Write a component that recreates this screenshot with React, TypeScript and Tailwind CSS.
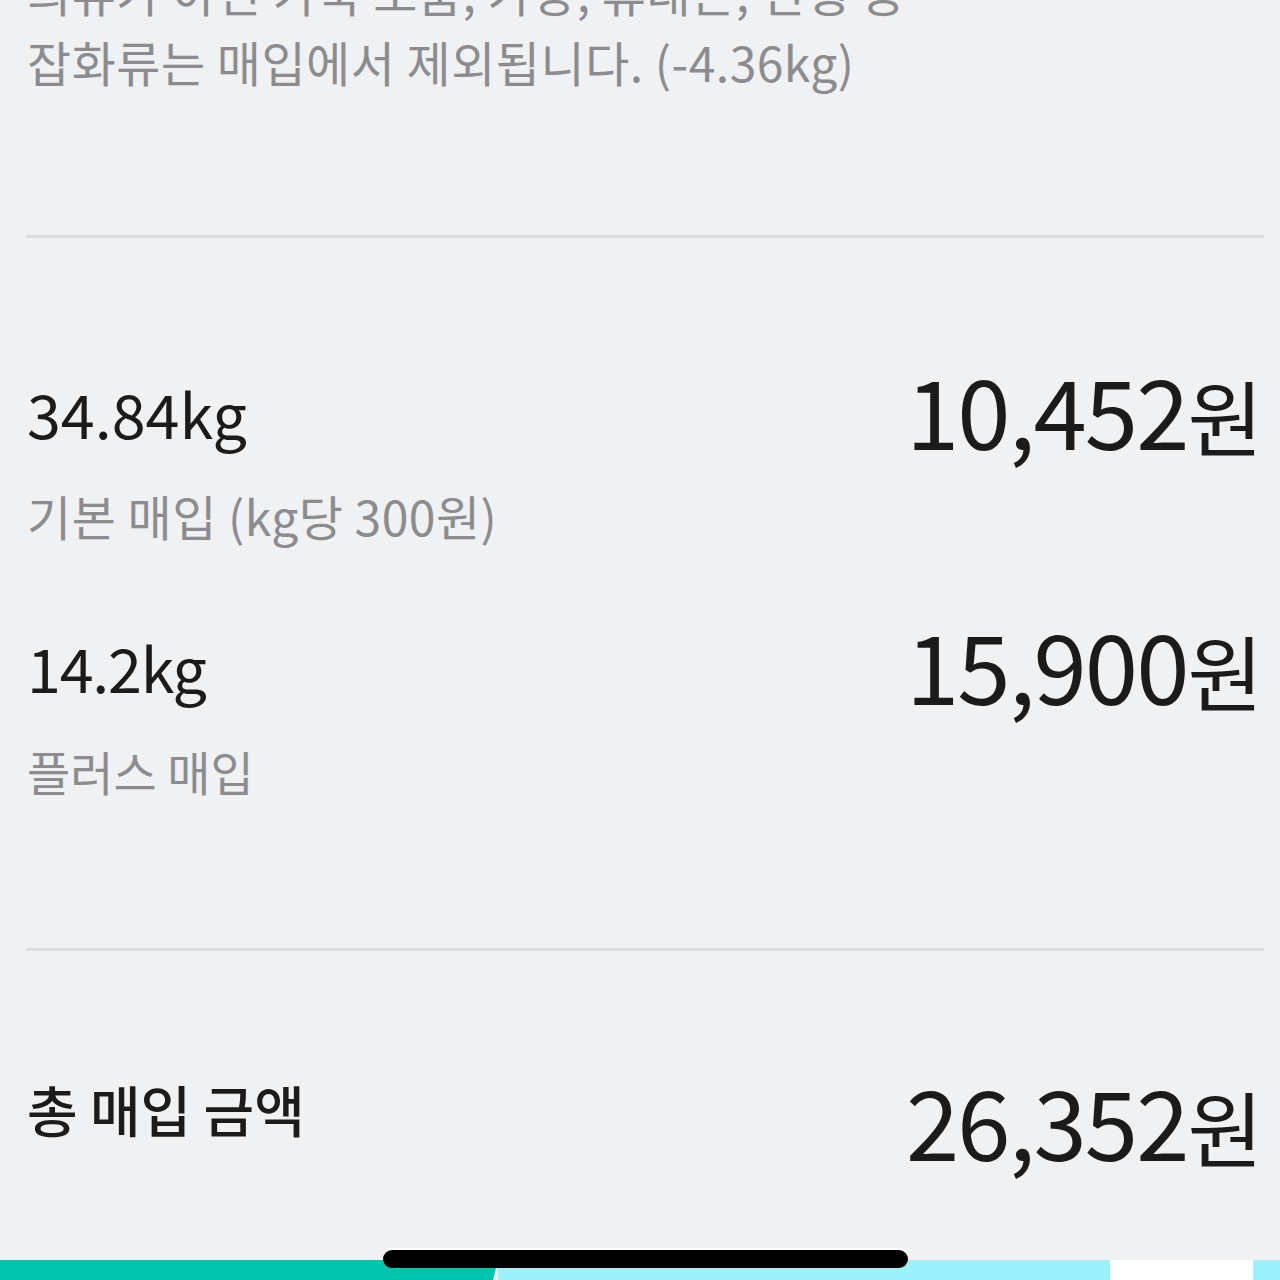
const font = "font-['Noto_Sans_CJK_KR','Noto_Sans',sans-serif]";

function Divider({ className = "" }: { className?: string }) {
  return <div className={`h-[3px] bg-[#dcdde0] ml-[26px] mr-[16px] ${className}`} />;
}

function Amount({ value }: { value: string }) {
  return (
    <div className="-mt-[5px] flex items-baseline leading-none text-[#1b1b1b] pr-[17px]">
      <span className="text-[96px] tracking-[-0.02em]">{value}</span>
      <span className="text-[82px]">원</span>
    </div>
  );
}

export default function App() {
  return (
    <div className={`${font} relative w-[1280px] h-[1280px] overflow-hidden bg-[#f0f1f3] flex flex-col`}>
      {/* 안내 문구 */}
      <p className="-mt-[44px] pl-[27px] text-[48px] leading-[70px] text-[#8c8c8e] whitespace-nowrap tracking-[0.01em]">
        의류가 아닌 가죽 소품, 가방, 휴대폰, 인형 등
        <br />
        잡화류는 매입에서 제외됩니다. (-4.36kg)
      </p>

      <Divider className="mt-[139px]" />

      {/* 기본 매입 */}
      <div className="mt-[128px] pl-[27px] flex justify-between items-start">
        <div className="flex flex-col">
          <span className="pt-[16px] text-[61px] leading-none text-[#1b1b1b]">34.84kg</span>
          <span className="mt-[48px] text-[48px] leading-none text-[#8c8c8e] tracking-[0.01em]">기본 매입 (kg당 300원)</span>
        </div>
        <Amount value="10,452" />
      </div>

      {/* 플러스 매입 */}
      <div className="mt-[82px] pl-[27px] flex justify-between items-start">
        <div className="flex flex-col">
          <span className="pt-[15px] text-[61px] leading-none text-[#1b1b1b] tracking-[-0.02em]">14.2kg</span>
          <span className="mt-[50px] text-[47px] leading-none text-[#8c8c8e]">플러스 매입</span>
        </div>
        <Amount value="15,900" />
      </div>

      <Divider className="mt-[154px]" />

      {/* 총 매입 금액 */}
      <div className="mt-[126px] pl-[27px] flex justify-between items-start">
        <span className="mt-[4px] text-[55px] leading-none font-medium text-[#1b1b1b]">총 매입 금액</span>
        <Amount value="26,352" />
      </div>

      {/* 하단 배너 상단부 */}
      <div className="mt-auto h-[20px] flex">
        <div className="w-[498px] bg-[#00c4ac] [clip-path:polygon(0_0,100%_0,99%_100%,0_100%)]" />
        <div className="flex-1 bg-[#9cf2fb]" />
        <div className="w-[143px] bg-white" />
        <div className="w-[27px] bg-[#9cf2fb]" />
      </div>

      {/* 홈 인디케이터 */}
      <div className="absolute left-[383px] top-[1250px] w-[525px] h-[18px] rounded-full bg-black shadow-[0_-2px_0_#ffffff]" />
    </div>
  );
}
